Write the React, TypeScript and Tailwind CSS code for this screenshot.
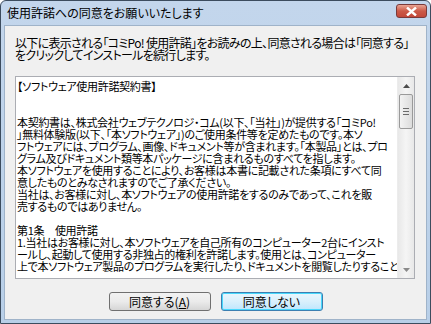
import React from "react";

const licenseLines = [
  "【ソフトウェア使用許諾契約書】",
  "",
  "",
  "本契約書は、株式会社ウェブテクノロジ・コム(以下、「当社」)が提供する「コミPo!",
  "」無料体験版(以下、「本ソフトウェア」)のご使用条件等を定めたものです。本ソ",
  "フトウェアには、プログラム、画像、ドキュメント等が含まれます。「本製品」とは、プロ",
  "グラム及びドキュメント類等本パッケージに含まれるものすべてを指します。",
  "本ソフトウェアを使用することにより、お客様は本書に記載された条項にすべて同",
  "意したものとみなされますのでご了承ください。",
  "当社は、お客様に対し、本ソフトウェアの使用許諾をするのみであって、これを販",
  "売するものではありません。",
  "",
  "第1条　使用許諾",
  "1.当社はお客様に対し、本ソフトウェアを自己所有のコンピューター2台にインスト",
  "ールし、起動して使用する非独占的権利を許諾します。使用とは、コンピューター",
  "上で本ソフトウェア製品のプログラムを実行したり、ドキュメントを閲覧したりすること",
];

const jp = "font-['Noto_Sans_CJK_JP',sans-serif] [font-feature-settings:'palt']";

function ScrollBar() {
  return (
    <div className="w-[17px] flex flex-col bg-gradient-to-r from-[#e8e8e8] via-[#f5f5f5] to-[#e8e8e8] border-l border-[#ececec]">
      <div className="h-[17px] flex items-center justify-center">
        <svg width="7" height="4" viewBox="0 0 7 4">
          <path d="M3.5 0 L7 4 L0 4 Z" fill="#4d4d4d" />
        </svg>
      </div>
      <div className="mx-[1px] h-[35px] rounded-[2px] border border-[#9a9a9a] bg-gradient-to-r from-[#f3f3f3] to-[#dcdcdc] flex flex-col items-center justify-center gap-[2px]">
        <div className="w-[6px] h-px bg-[#6b6b6b]" />
        <div className="w-[6px] h-px bg-[#6b6b6b]" />
        <div className="w-[6px] h-px bg-[#6b6b6b]" />
      </div>
      <div className="flex-1" />
      <div className="h-[17px] flex items-center justify-center">
        <svg width="7" height="4" viewBox="0 0 7 4">
          <path d="M0 0 L7 0 L3.5 4 Z" fill="#8a8a8a" />
        </svg>
      </div>
    </div>
  );
}

export default function App() {
  return (
    <div className="w-[431px] h-[324px] flex flex-col bg-gradient-to-b from-[#c3d6ec] to-[#b8cfe8] border border-[#3c4c5e] rounded-t-[6px] overflow-hidden">
      <div className="h-[24px] flex items-center justify-between pl-[6px] pr-[3px]">
        <span className={`${jp} text-[12px] text-black`}>使用許諾への同意をお願いいたします</span>
        <div className="w-[31px] h-[14px] -mt-[4px] rounded-[3px] border border-[#7a3a3a] bg-gradient-to-b from-[#e8a595] via-[#cc5a48] to-[#c2483a] flex items-center justify-center">
          <svg width="11" height="9" viewBox="0 0 11 9">
            <path d="M1 0.5 L5.5 4.5 L10 0.5 M1 8.5 L5.5 4.5 L10 8.5" stroke="#ffffff" strokeWidth="2.4" fill="none" />
          </svg>
        </div>
      </div>
      <div className="flex-1 mx-[3px] mb-[3px] bg-[#f0f0f0] border border-[#9fb3c9] flex flex-col pl-[10px] pr-[10px] pt-[11px]">
        <div className={`${jp} text-[12px] leading-[12px] tracking-[-0.7px] text-black`}>
          <div className="whitespace-nowrap">以下に表示される「コミPo! 使用許諾」をお読みの上、同意される場合は「同意する」</div>
          <div className="whitespace-nowrap">をクリックしてインストールを続行します。</div>
        </div>
        <div className="mt-[15px] h-[203px] w-[400px] border border-[#abadb3] bg-white flex">
          <div className={`${jp} flex-1 pl-[1px] pt-[3px] text-[11px] leading-[12px] tracking-[-0.3px] text-black overflow-hidden`}>
            {licenseLines.map((line, i) => (
              <div key={i} className="h-[12px] whitespace-nowrap">
                {line}
              </div>
            ))}
          </div>
          <ScrollBar />
        </div>
        <div className="mt-[13px] flex justify-center gap-[10px]">
          <button className={`${jp} w-[102px] h-[19px] rounded-[3px] border border-[#707070] bg-gradient-to-b from-[#f2f2f2] via-[#ebebeb] to-[#d6d6d6] text-[12px] leading-[12px] text-black`}>
            同意する(<span className="underline">A</span>)
          </button>
          <button className={`${jp} w-[102px] h-[19px] rounded-[3px] border border-[#3c7fb1] bg-gradient-to-b from-[#eaf6fd] via-[#d9f0fc] to-[#bee6fd] shadow-[inset_0_0_0_1px_#48d8fc] text-[12px] leading-[12px] text-black`}>
            同意しない
          </button>
        </div>
      </div>
    </div>
  );
}
